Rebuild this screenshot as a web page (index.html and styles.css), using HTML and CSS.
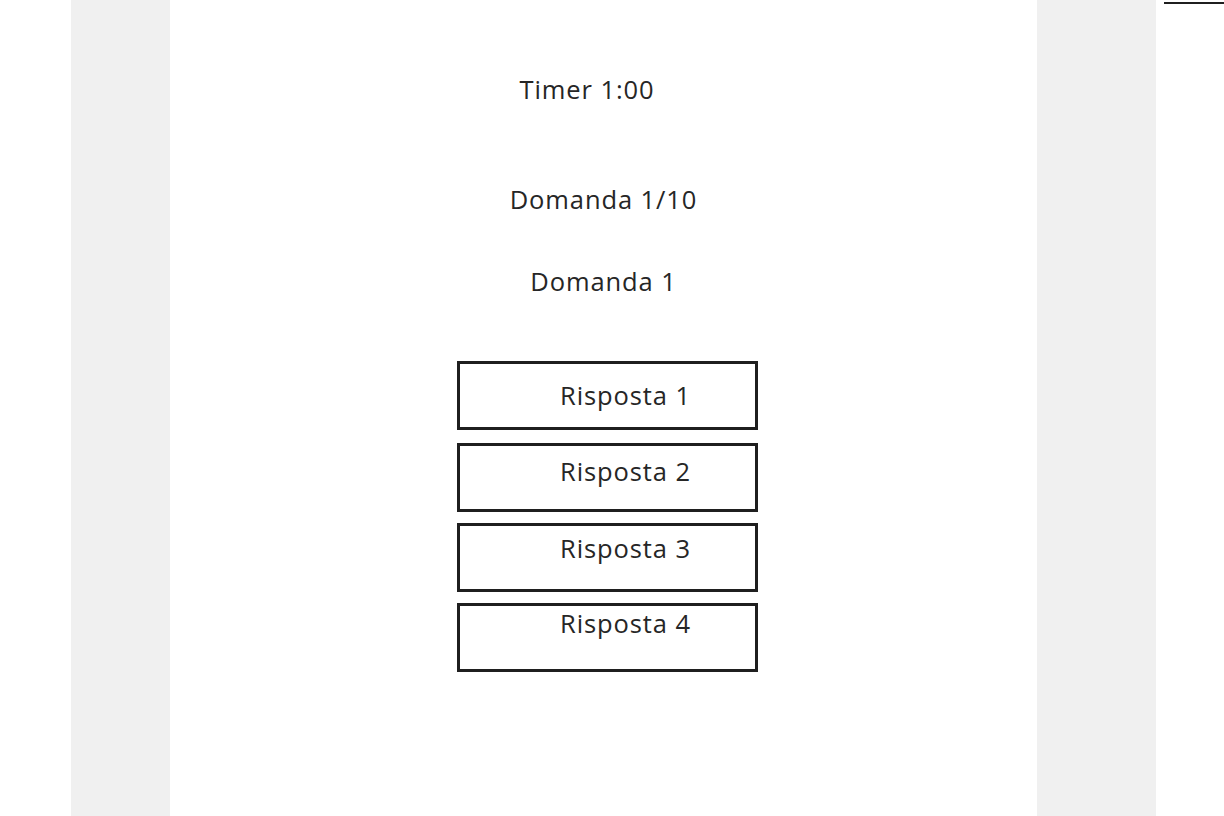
FILE: index.html
```html
<!DOCTYPE html>
<html lang="it">
<head>
<meta charset="utf-8">
<title>Quiz</title>
<link rel="stylesheet" href="styles.css">
</head>
<body>
<div class="page">
  <div class="gutter"></div>
  <div class="side side-left"></div>
  <main class="quiz">
    <div class="timer">Timer 1:00</div>
    <div class="counter">Domanda 1/10</div>
    <div class="question">Domanda 1</div>
    <div class="answers">
      <div class="answer answer-1">Risposta 1</div>
      <div class="answer answer-2">Risposta 2</div>
      <div class="answer answer-3">Risposta 3</div>
      <div class="answer answer-4">Risposta 4</div>
    </div>
  </main>
  <div class="side side-right"></div>
  <div class="gutter gutter-right"><div class="rule"></div></div>
</div>
</body>
</html>
```

FILE: styles.css
```css
html, body {
  margin: 0;
  padding: 0;
  background: #ffffff;
}
body {
  font-family: "Open Sans", "Liberation Sans", sans-serif;
  color: #262626;
}
.page {
  display: grid;
  grid-template-columns: 71px 99px 867px 119px 1fr;
  height: 816px;
  overflow: hidden;
}
.side {
  background: #f0f0f0;
}
.quiz {
  display: flex;
  flex-direction: column;
  padding-top: 72px;
  font-size: 25.5px;
  line-height: 34px;
  letter-spacing: 0.9px;
}
.timer {
  text-align: center;
  padding-right: 33px;
}
.counter {
  text-align: center;
  margin-top: 76px;
}
.question {
  text-align: center;
  margin-top: 48px;
}
.answers {
  margin-top: 63px;
  align-self: flex-start;
  margin-left: 287px;
  display: flex;
  flex-direction: column;
}
.answer {
  box-sizing: border-box;
  width: 301px;
  height: 69px;
  border: 3px solid #1f1f1f;
  padding-left: 100px;
}
.answer-1 { padding-top: 14px; }
.answer-2 { padding-top: 8px; margin-top: 13px; }
.answer-3 { padding-top: 5px; margin-top: 11px; }
.answer-4 { padding-top: 0; margin-top: 11px; }
.gutter-right {
  display: flex;
  flex-direction: column;
}
.rule {
  margin-top: 2px;
  margin-left: 8px;
  height: 2px;
  background: #1f1f1f;
}
```
